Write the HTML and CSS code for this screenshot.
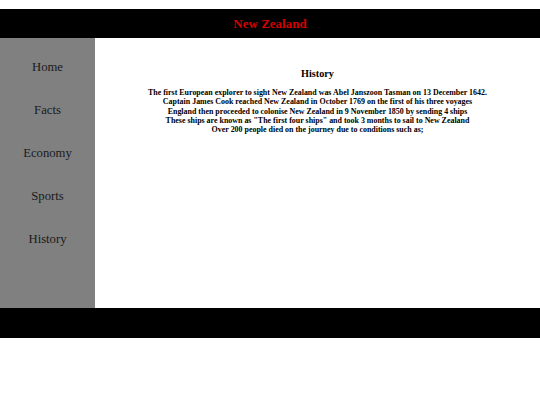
FILE: index.html
```html
<!DOCTYPE html>
<html>
<head>
<meta charset="utf-8">
<link rel="stylesheet" href="styles.css">
</head>
<body>
<header class="top">New Zealand</header>
<div class="main">
  <nav class="side">
    <a class="nav-item">Home</a>
    <a class="nav-item">Facts</a>
    <a class="nav-item">Economy</a>
    <a class="nav-item">Sports</a>
    <a class="nav-item">History</a>
  </nav>
  <section class="content">
    <h3 class="title">History</h3>
    <p class="text">The first European explorer to sight New Zealand was Abel Janszoon Tasman on 13 December 1642.<br>Captain James Cook reached New Zealand in October 1769 on the first of his three voyages<br>England then proceeded to colonise New Zealand in 9 November 1850 by sending 4 ships<br>These ships are known as "The first four ships" and took 3 months to sail to New Zealand<br>Over 200 people died on the journey due to conditions such as;</p>
  </section>
</div>
<footer class="bottom"></footer>
</body>
</html>
```
FILE: styles.css
```css
html, body {
  margin: 0;
  padding: 0;
  background: #fff;
}
body {
  padding-top: 9px;
  font-family: "Liberation Serif", "Times New Roman", serif;
}
.top {
  height: 29px;
  background: #000;
  color: #d40000;
  font-weight: bold;
  font-size: 13px;
  display: flex;
  align-items: center;
  justify-content: center;
}
.main {
  display: flex;
  height: 270px;
}
.side {
  width: 95px;
  background: #808080;
  display: flex;
  flex-direction: column;
  padding-top: 8px;
}
.nav-item {
  height: 43px;
  line-height: 43px;
  text-align: center;
  font-size: 12.7px;
  color: #1a1a1a;
}
.content {
  flex: 1;
  text-align: center;
  color: #000;
}
.title {
  margin: 29px 0 0;
  font-size: 10.2px;
  line-height: 14px;
  font-weight: bold;
}
.text {
  margin: 7px 0 0;
  font-size: 7.95px;
  line-height: 9.3px;
  font-weight: bold;
}
.bottom {
  height: 30px;
  background: #000;
}
```
